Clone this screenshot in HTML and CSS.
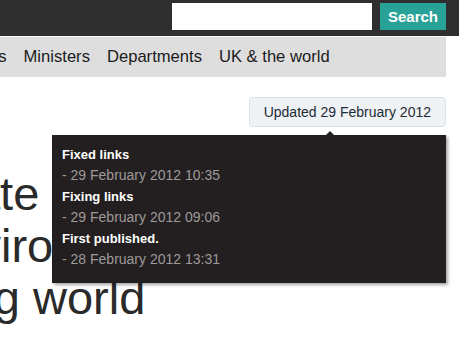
FILE: index.html
```html
<!DOCTYPE html>
<html lang="en">
<head>
  <meta charset="UTF-8">
  <meta name="viewport" content="width=device-width, initial-scale=1.0">
  <title>Inside Government</title>
  <link rel="stylesheet" href="styles.css">
</head>
<body>
  <header class="site-header">
    <div class="container header-inner">
      <form class="search" action="#">
        <input class="search-input" type="search" name="q" aria-label="Search">
        <button class="search-btn" type="submit">Search</button>
      </form>
    </div>
  </header>

  <div class="container">
    <nav class="main-nav">
      <ul class="nav-list">
        <li><a href="#">Consultations</a></li>
        <li><a href="#">Ministers</a></li>
        <li><a href="#">Departments</a></li>
        <li><a href="#">UK &amp; the world</a></li>
      </ul>
    </nav>

    <div class="meta">
      <div class="history">
        <button class="updated-btn">Updated 29 February 2012</button>
        <!-- tooltip con el historial de cambios -->
        <div class="history-tip">
          <dl class="changes">
            <dt>Fixed links</dt>
            <dd>- 29 February 2012 10:35</dd>
            <dt>Fixing links</dt>
            <dd>- 29 February 2012 09:06</dd>
            <dt>First published.</dt>
            <dd>- 28 February 2012 13:31</dd>
          </dl>
        </div>
      </div>
    </div>

    <h1 class="page-title">
      <span class="line line-1">Climate</span>
      <span class="line line-2">Environment</span>
      <span class="line line-3">a changing world</span>
    </h1>
  </div>
</body>
</html>
```

FILE: styles.css
```css
:root {
  --header-bg: #2f2f2f;
  --nav-bg: #dedede;
  --turquoise: #28a197;
  --text: #222222;
  --tip-bg: #231f20;
  --tip-muted: #9d9a9a;
}
* {
  box-sizing: border-box;
}
body {
  margin: 0;
  font-family: 'Liberation Sans', Arial, sans-serif;
  color: var(--text);
  background: #ffffff;
  overflow: hidden;
}
.container {
  margin-right: 13px;
}
.site-header {
  background: var(--header-bg);
  height: 36px;
}
.header-inner {
  display: flex;
  justify-content: flex-end;
  padding-top: 3px;
}
.search {
  display: flex;
  gap: 8px;
  margin: 0;
}
.search-input {
  width: 200px;
  height: 27px;
  border: none;
  margin: 0;
  padding: 0 6px;
  background: #ffffff;
}
.search-btn {
  width: 66px;
  height: 27px;
  border: none;
  background: var(--turquoise);
  color: #ffffff;
  font-family: inherit;
  font-size: 15px;
  font-weight: 700;
  padding: 0;
  cursor: pointer;
}
.main-nav {
  margin-top: 1px;
  background: var(--nav-bg);
  height: 40px;
  overflow: hidden;
}
.nav-list {
  display: flex;
  gap: 17px;
  list-style: none;
  margin: 0 0 0 -94px;
  padding: 0;
  white-space: nowrap;
}
.nav-list a {
  display: block;
  line-height: 40px;
  font-size: 16.6px;
  color: #1b1b1b;
  text-decoration: none;
}
.meta {
  display: flex;
  justify-content: flex-end;
  margin-top: 20px;
}
.history {
  position: relative;
}
.updated-btn {
  display: block;
  height: 30px;
  padding: 0 14px 0 14px;
  background: #eef2f4;
  border: 1px solid #dbe1e4;
  border-radius: 3px;
  font-family: inherit;
  font-size: 14px;
  color: #1d2b38;
  cursor: pointer;
}
.history-tip {
  position: absolute;
  top: calc(100% + 8px);
  right: 0;
  width: 394px;
  background: var(--tip-bg);
  padding: 9px 10px 13px;
  box-shadow: 2px 2px 3px rgba(0, 0, 0, 0.35);
  z-index: 2;
}
.history-tip::before {
  content: '';
  position: absolute;
  top: -4px;
  right: 112px;
  border-left: 4px solid transparent;
  border-right: 4px solid transparent;
  border-bottom: 4px solid var(--tip-bg);
}
.changes {
  margin: 0;
}
.changes dt {
  font-size: 13px;
  font-weight: 700;
  line-height: 21px;
  color: #ffffff;
}
.changes dd {
  margin: 0;
  font-size: 14px;
  line-height: 21px;
  color: var(--tip-muted);
}
.page-title {
  margin: 41px 0 0;
  font-size: 47px;
  font-weight: 400;
  line-height: 52px;
  color: #2a2a2a;
  white-space: nowrap;
}
.line {
  display: block;
}
.line-1 {
  margin-left: -120px;
}
.line-2 {
  margin-left: -80px;
}
.line-3 {
  margin-left: -210px;
}
```
